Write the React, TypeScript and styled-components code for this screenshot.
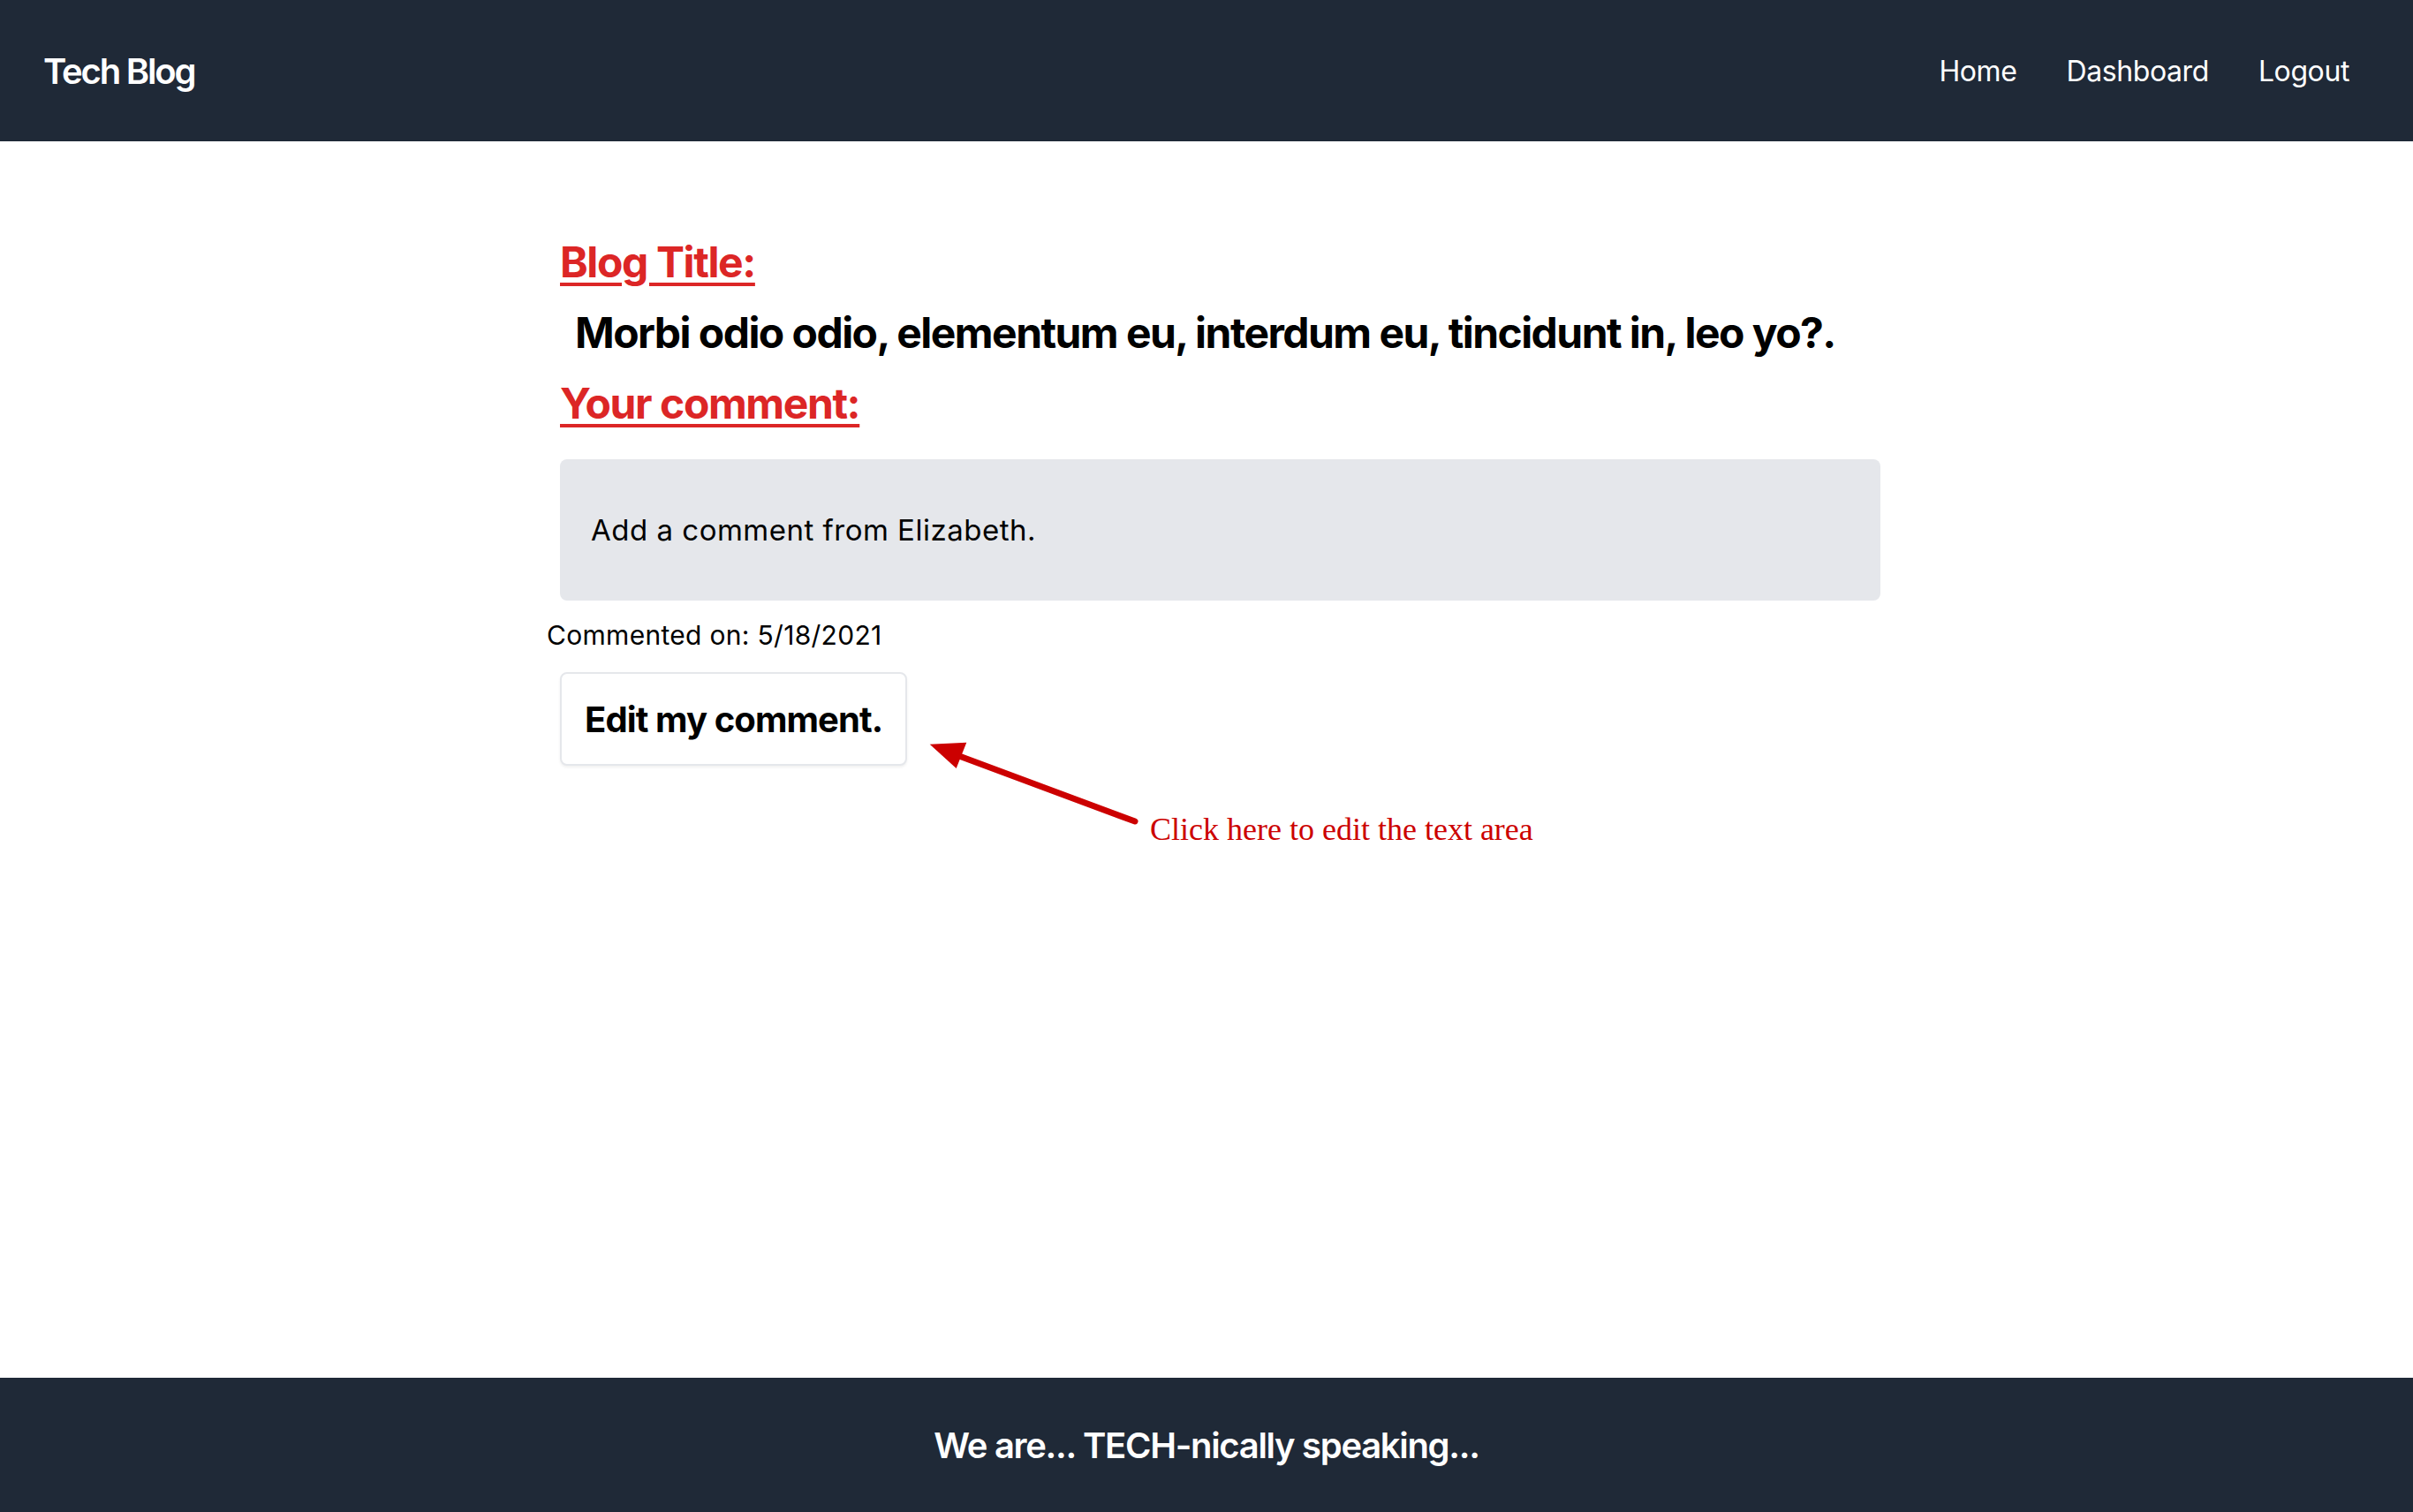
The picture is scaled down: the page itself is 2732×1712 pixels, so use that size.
import React from "react";
import styled, { createGlobalStyle } from "styled-components";

const GlobalStyle = createGlobalStyle`
  html, body { margin: 0; padding: 0; background: #ffffff; }
  body { font-family: Inter, "Noto Sans", "Liberation Sans", sans-serif; color: #000; }
  * { box-sizing: border-box; }
`;

const Page = styled.div`
  position: relative;
  min-height: 100vh;
  display: flex;
  flex-direction: column;
`;

const Header = styled.header`
  height: 160px;
  background: #1f2937;
  display: flex;
  align-items: center;
  justify-content: space-between;
  padding: 0 72px 0 49px;
`;

const Brand = styled.a`
  color: #ffffff;
  font-size: 40px;
  font-weight: 600;
  letter-spacing: -2.2px;
  text-decoration: none;
`;

const Nav = styled.nav`
  display: flex;
  align-items: center;
  gap: 56px;
`;

const NavLink = styled.a`
  color: #ffffff;
  font-size: 32px;
  font-weight: 400;
  letter-spacing: -0.4px;
  text-decoration: none;
`;

const Main = styled.main`
  flex: 1;
  padding-top: 105px;
`;

const Column = styled.section`
  width: 1495px;
  margin-left: calc(50% - 732px);
  display: flex;
  flex-direction: column;
  align-items: flex-start;
`;

const Label = styled.h2<{ $gap?: number }>`
  margin: ${(p) => p.$gap ?? 0}px 0 0 0;
  font-size: 48px;
  line-height: 64px;
  font-weight: 700;
  color: #dc2626;
  text-decoration: underline;
  text-decoration-thickness: 4px;
  text-underline-offset: 6px;
  letter-spacing: -1.4px;
`;

const TitleText = styled.h1`
  margin: 16px 0 0 17px;
  font-size: 48px;
  line-height: 64px;
  font-weight: 700;
  letter-spacing: -1.55px;
  color: #000;
`;

const CommentBox = styled.div`
  margin-top: 31px;
  width: 100%;
  height: 160px;
  background: #e5e7eb;
  border-radius: 8px;
  display: flex;
  align-items: center;
  padding-left: 35px;
  font-size: 33px;
  letter-spacing: 0.5px;
`;

const Meta = styled.p`
  margin: 15px 0 0 -15px;
  font-size: 30px;
  line-height: 48px;
  letter-spacing: 0.3px;
`;

const EditButton = styled.button`
  margin-top: 18px;
  height: 106px;
  padding: 0 26px;
  background: #ffffff;
  border: 2px solid #e5e7eb;
  border-radius: 8px;
  box-shadow: 0 2px 3px rgba(0, 0, 0, 0.06);
  font-family: inherit;
  font-size: 40px;
  font-weight: 700;
  letter-spacing: -0.9px;
  color: #000;
  cursor: pointer;
`;

const Annotation = styled.div`
  position: absolute;
  left: 1040px;
  top: 830px;
  display: flex;
  align-items: flex-start;
  pointer-events: none;
`;

const AnnotationText = styled.span`
  margin-top: 89px;
  margin-left: 2px;
  font-family: "Liberation Serif", "Times New Roman", serif;
  font-size: 36px;
  line-height: 40px;
  color: #cc0000;
  white-space: nowrap;
`;

const Footer = styled.footer`
  height: 152px;
  background: #1f2937;
  display: flex;
  align-items: center;
  justify-content: center;
  color: #ffffff;
  font-size: 40px;
  font-weight: 600;
  letter-spacing: -1.3px;
`;

export default function App() {
  return (
    <Page>
      <GlobalStyle />
      <Header>
        <Brand href="#">Tech Blog</Brand>
        <Nav>
          <NavLink href="#">Home</NavLink>
          <NavLink href="#">Dashboard</NavLink>
          <NavLink href="#">Logout</NavLink>
        </Nav>
      </Header>
      <Main>
        <Column>
          <Label>Blog Title:</Label>
          <TitleText>Morbi odio odio, elementum eu, interdum eu, tincidunt in, leo yo?.</TitleText>
          <Label $gap={16}>Your comment:</Label>
          <CommentBox>Add a comment from Elizabeth.</CommentBox>
          <Meta>Commented on: 5/18/2021</Meta>
          <EditButton>Edit my comment.</EditButton>
        </Column>
      </Main>
      <Annotation>
        <svg width="260" height="110" viewBox="1040 830 260 110">
          <line x1="1086" y1="856" x2="1285" y2="930" stroke="#cc0000" strokeWidth="7" strokeLinecap="round" />
          <polygon points="1052.7,842.7 1094.3,840.7 1082.7,870" fill="#cc0000" />
        </svg>
        <AnnotationText>Click here to edit the text area</AnnotationText>
      </Annotation>
      <Footer>We are... TECH-nically speaking...</Footer>
    </Page>
  );
}
